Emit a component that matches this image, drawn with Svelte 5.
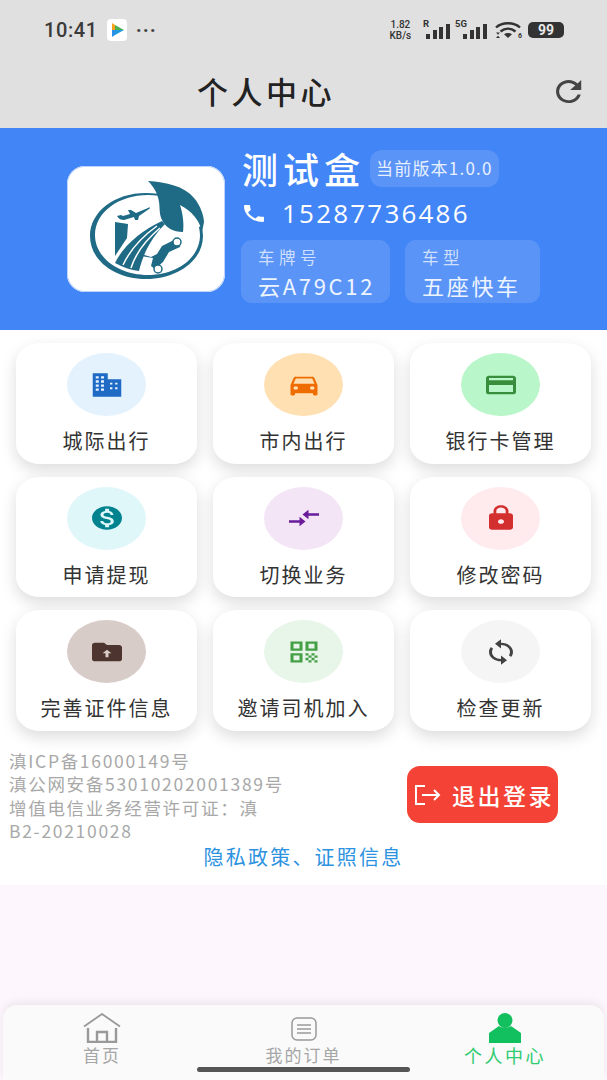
<script lang="ts">
	const buildingWindows = 'M4.5 4.5h2v2h-2zM8 4.5h2v2H8zM4.5 8h2v2h-2zM8 8h2v2H8zM4.5 11.5h2v2h-2zM8 11.500h2v2H8zM4.5 15h2v2h-2zM8 15h2v2H8zM14 10h1.6v1.6H14zM17.4 10H19v1.6h-1.6zM14 14h1.6v1.6H14zM17.4 14H19v1.6h-1.6z';

	const menu = [
		{ label: '城际出行', bg: '#e3f2fd', fg: '#1f6ac4', d: 'M2.5 2h10v5h9v15h-19z', over: buildingWindows },
		{ label: '市内出行', bg: '#ffe0b2', fg: '#ef6c00', d: 'M18.92 6.01C18.72 5.42 18.16 5 17.5 5h-11c-.66 0-1.21.42-1.42 1.01L3 12v8c0 .55.45 1 1 1h1c.55 0 1-.45 1-1v-1h12v1c0 .55.45 1 1 1h1c.55 0 1-.45 1-1v-8l-2.08-5.99zM6.5 16c-.83 0-1.5-.67-1.5-1.5S5.67 13 6.5 13s1.5.67 1.5 1.5S7.33 16 6.5 16zm11 0c-.83 0-1.5-.67-1.5-1.5s.67-1.5 1.5-1.5 1.5.67 1.5 1.5-.67 1.5-1.5 1.5zM5 11l1.5-4.5h11L19 11H5z' },
		{ label: '银行卡管理', bg: '#b9f6ca', fg: '#388e3c', d: 'M20 4H4c-1.11 0-1.99.89-1.99 2L2 18c0 1.11.89 2 2 2h16c1.11 0 2-.89 2-2V6c0-1.11-.89-2-2-2zm0 14H4v-6h16v6zm0-10H4V6h16v2z' },
		{ label: '申请提现', bg: '#e0f7fa', fg: '#00838f', d: 'M12 2C6.48 2 2 6.48 2 12s4.48 10 10 10 10-4.48 10-10S17.52 2 12 2zm1.41 16.09V20h-2.67v-1.93c-1.71-.36-3.16-1.46-3.27-3.4h1.96c.1 1.05.82 1.87 2.65 1.87 1.96 0 2.4-.98 2.4-1.59 0-.83-.44-1.61-2.67-2.14-2.48-.6-4.18-1.62-4.18-3.67 0-1.72 1.39-2.84 3.11-3.21V4h2.67v1.95c1.86.45 2.79 1.86 2.87 3.39H14.3c-.05-1.11-.64-1.87-2.22-1.87-1.5 0-2.4.68-2.4 1.64 0 .84.65 1.39 2.67 1.91s4.18 1.39 4.18 3.91c-.01 1.83-1.38 2.83-3.12 3.16z' },
		{ label: '切换业务', bg: '#f3e5f5', fg: '#6a1b9a', d: 'M9.01 14H2v2h7.01v3L13 15l-3.99-4v3zm5.98-1v-3H22V8h-7.01V5L11 9l3.99 4z' },
		{ label: '修改密码', bg: '#ffebee', fg: '#d32f2f', d: 'M18 8h-1V6c0-2.76-2.24-5-5-5S7 3.24 7 6v2H6c-1.1 0-2 .9-2 2v10c0 1.1.9 2 2 2h12c1.1 0 2-.9 2-2V10c0-1.1-.9-2-2-2zm-6 9c-1.1 0-2-.9-2-2s.9-2 2-2 2 .9 2 2-.9 2-2 2zm3.1-9H8.9V6c0-1.71 1.39-3.1 3.1-3.1 1.71 0 3.1 1.39 3.1 3.1v2z' },
		{ label: '完善证件信息', bg: '#d7ccc8', fg: '#4e342e', d: 'M20 6h-8l-2-2H4c-1.1 0-2 .9-2 2v12c0 1.1.9 2 2 2h16c1.1 0 2-.9 2-2V8c0-1.1-.9-2-2-2z', over: 'M12 10l3 3h-2v3.5h-2V13H9z' },
		{ label: '邀请司机加入', bg: '#e8f5e9', fg: '#43a047', d: 'M3 11h8V3H3v8zm2-6h4v4H5V5zM3 21h8v-8H3v8zm2-6h4v4H5v-4zM13 3v8h8V3h-8zm6 6h-4V5h4v4zM13 13h2v2h-2zM17 13h2v2h-2zM15 15h2v2h-2zM19 15h2v2h-2zM13 17h2v2h-2zM17 17h2v2h-2zM15 19h2v2h-2zM19 19h2v2h-2z' },
		{ label: '检查更新', bg: '#f5f5f5', fg: '#424242', d: 'M12 4V1L8 5l4 4V6c3.31 0 6 2.69 6 6 0 1.01-.25 1.97-.7 2.8l1.46 1.46C19.54 15.03 20 13.57 20 12c0-4.42-3.58-8-8-8zm0 14c-3.31 0-6-2.69-6-6 0-1.01.25-1.97.7-2.8L5.24 7.74C4.46 8.97 4 10.43 4 12c0 4.42 3.58 8 8 8v3l4-4-4-4v3z' }
	];

	const signalBars = [5, 9, 12, 15];
</script>

<div class="page">
	<header class="top">
		<div class="status">
			<div class="status-left">
				<span class="time">10:41</span>
				<svg class="app-icon" viewBox="0 0 20 22" width="20" height="22">
					<rect width="20" height="22" rx="4" fill="#fff" />
					<path d="M5 4v7h3V6z" fill="#f6a21e" />
					<path d="M5 18v-7h3v5z" fill="#2a8fe8" />
					<path d="M8 6l9 5-9 0z" fill="#4caf50" />
					<path d="M8 16l9-5-9 0z" fill="#1e9be0" />
				</svg>
				<span class="dots">···</span>
			</div>
			<div class="status-right">
				<span class="speed">1.82<br />KB/s</span>
				<span class="net net-r"><i>R</i>
					<span class="bars">{#each signalBars as h}<b style="height:{h}px"></b>{/each}</span>
				</span>
				<span class="net net-5g"><i>5G</i>
					<span class="bars">{#each signalBars as h}<b style="height:{h}px"></b>{/each}</span>
				</span>
				<span class="wifi">
					<svg viewBox="0 0 26 18" width="26" height="18">
						<path d="M1 6.500C7 .8 19 .8 25 6.500" fill="none" stroke="#333" stroke-width="2.400" />
						<path d="M5.500 10.500c4.500-3.800 10.500-3.800 15 0" fill="none" stroke="#333" stroke-width="2.400" />
						<path d="M13 17l-4-3.800c2.400-1.500 5.600-1.500 8 0z" fill="#333" />
						<path d="M1 11.500h4l-2 2.200zM1 17h4l-2-2.200z" fill="#333" />
					</svg>
					<em>6</em>
				</span>
				<span class="battery">99</span>
			</div>
		</div>
		<div class="nav">
			<h1>个人中心</h1>
			<svg class="refresh" viewBox="4 4 16.500 16" width="26" height="23" preserveAspectRatio="none">
				<path fill="#444" d="M17.65 6.35C16.2 4.9 14.21 4 12 4c-4.42 0-7.99 3.58-7.99 8s3.57 8 7.99 8c3.73 0 6.84-2.55 7.73-6h-2.08c-.82 2.33-3.04 4-5.65 4-3.31 0-6-2.69-6-6s2.69-6 6-6c1.66 0 3.14.69 4.22 1.78L13 11h7V4l-2.35 2.35z" />
			</svg>
		</div>
	</header>

	<section class="profile">
		<div class="logo">
			<svg viewBox="0 0 158 126" width="158" height="126">
				<!-- ring, thick on the lower left and thin on the upper right -->
				<path fill-rule="evenodd" fill="#1f6a85" d="M79 27C47 27 23 46 23 70s24 43 56 43 57-19 57-43S111 27 79 27zM81 29c29 0 52 17 52 40s-23 40-52 40-53-17-53-40 24-40 53-40z" />
				<path d="M93 22h46v36l-14 6-32-14z" fill="#fff" />
				<!-- leaf -->
				<path fill="#1f6a85" d="M81 15c18 1 36 5 46 17 7 8 10 19 10 24l-2 10c-2-11-10-21-22-27 3 9 4 19 3 27-10 0-17-4-21-12-3-6-2-12-3-18-1-8-5-15-11-21z" />
				<!-- plane -->
				<path fill="#1f6a85" d="M50 50l4-1 2 1 7-2-2-4h3l5 3 12-5c2-1 3 0 1 1l-10 7-1 4h-3l-1-3-10 3c-3 0-5-1-7-4z" />
				<!-- building -->
				<path fill="#1f6a85" d="M48 56l13 2-1 14-12 18z" />
				<!-- road -->
				<path fill="#1f6a85" d="M95 55l3 3c-11 11-21 26-26 47-8-1-17-4-24-8 8-17 27-33 47-42z" />
				<path d="M90 60C76 70 64 82 56 99" fill="none" stroke="#fff" stroke-width="1.500" />
				<path d="M93 62C80 73 69 86 64 102" fill="none" stroke="#fff" stroke-width="1.500" />
				<!-- car -->
				<path fill="#1f6a85" d="M74 88l10 3 6-3 5-8 14-7 5 2-1 6-11 5-6 10-8 7-4-3 2-8-12-2z" />
				<circle cx="110" cy="76" r="4" fill="#fff" stroke="#1f6a85" stroke-width="1.500" />
				<circle cx="91" cy="103" r="4" fill="#fff" stroke="#1f6a85" stroke-width="1.500" />
			</svg>
		</div>
		<div class="info">
			<div class="name-row">
				<span class="name">测试盒</span>
				<span class="version">当前版本1.0.0</span>
			</div>
			<div class="phone">
				<svg viewBox="3 3 18 18" width="20" height="17" preserveAspectRatio="none">
					<path fill="#fff" d="M6.62 10.79c1.44 2.83 3.76 5.14 6.59 6.59l2.2-2.2c.27-.27.67-.36 1.02-.24 1.12.37 2.33.57 3.57.57.55 0 1 .45 1 1V20c0 .55-.45 1-1 1-9.39 0-17-7.61-17-17 0-.55.45-1 1-1h3.5c.55 0 1 .45 1 1 0 1.25.2 2.45.57 3.57.11.35.03.74-.25 1.02l-2.2 2.2z" />
				</svg>
				<span>15287736486</span>
			</div>
			<div class="tags">
				<div class="tag plate">
					<span class="tag-label">车牌号</span>
					<span class="tag-value">云A79C12</span>
				</div>
				<div class="tag model">
					<span class="tag-label">车型</span>
					<span class="tag-value">五座快车</span>
				</div>
			</div>
		</div>
	</section>

	<section class="grid">
		{#each menu as item}
			<div class="card">
				<div class="circle" style="background:{item.bg}">
					<svg viewBox="0 0 24 24" width="36" height="28" preserveAspectRatio="none">
						<path d={item.d} fill={item.fg} />
						{#if item.over}<path d={item.over} fill={item.bg} />{/if}
					</svg>
				</div>
				<span class="card-label">{item.label}</span>
			</div>
		{/each}
	</section>

	<section class="legal">
		<div class="legal-row">
			<div class="legal-text">
				<div>滇ICP备16000149号</div>
				<div>滇公网安备53010202001389号</div>
				<div>增值电信业务经营许可证：滇</div>
				<div>B2-20210028</div>
			</div>
			<button class="logout">
				<svg viewBox="0 0 28 22" width="28" height="22">
					<path d="M11 2H2v18h9" fill="none" stroke="#fff" stroke-width="2" />
					<path d="M8 11h17M20 6l5 5-5 5" fill="none" stroke="#fff" stroke-width="2" />
				</svg>
				<span>退出登录</span>
			</button>
		</div>
		<div class="privacy">隐私政策、证照信息</div>
	</section>

	<div class="spacer">
		<nav class="tabs">
			<div class="tab">
				<svg viewBox="0 0 38 30" width="38" height="30">
					<path d="M1 13.500L19 1l18 12.500" fill="none" stroke="#999" stroke-width="1.800" />
					<path d="M5 15v14h28V15M14 29V19h10v10" fill="none" stroke="#999" stroke-width="2.400" />
				</svg>
				<span>首页</span>
			</div>
			<div class="tab">
				<svg class="doc" viewBox="0 0 26 24" width="26" height="24">
					<rect x="1" y="1" width="24" height="22" rx="5" fill="none" stroke="#999" stroke-width="1.500" />
					<path d="M6 8h14M6 12h14M6 16h14" stroke="#999" stroke-width="1.500" />
				</svg>
				<span>我的订单</span>
			</div>
			<div class="tab active">
				<svg viewBox="0 0 32 30" width="32" height="30">
					<circle cx="16" cy="7.500" r="7.500" fill="#12c060" />
					<path d="M10 13c2 2 10 2 12 0l10 7v10H0V20z" fill="#12c060" />
				</svg>
				<span>个人中心</span>
			</div>
			<div class="home-bar"></div>
		</nav>
	</div>
</div>

<style>
	:global(body) {
		margin: 0;
		background: #fff;
	}

	.page {
		width: 607px;
		height: 1080px;
		display: flex;
		flex-direction: column;
		overflow: hidden;
		background: #fff;
		font-family: "Noto Sans CJK SC", "Noto Sans", sans-serif;
	}

	.top {
		height: 128px;
		background: #e0e0e0;
		flex: none;
	}

	.status {
		height: 60px;
		display: flex;
		align-items: center;
		justify-content: space-between;
		padding: 0 43px 0 44px;
	}

	.status-left,
	.status-right {
		display: flex;
		align-items: center;
	}

	.time {
		font-family: Roboto, sans-serif;
		font-size: 20px;
		font-weight: 500;
		letter-spacing: 0.6px;
		color: #3a3a3a;
	}

	.app-icon {
		margin-left: 9px;
	}

	.dots {
		margin-left: 9px;
		font-family: Roboto, sans-serif;
		font-size: 20px;
		font-weight: 700;
		letter-spacing: 1px;
		color: #444;
	}

	.speed {
		width: 25px;
		font-family: Roboto, sans-serif;
		font-size: 10px;
		font-weight: 500;
		line-height: 11px;
		text-align: center;
		color: #333;
		white-space: nowrap;
	}

	.net {
		position: relative;
		display: flex;
		align-items: flex-end;
		height: 18px;
	}

	.net-r {
		margin-left: 10px;
		padding-left: 3px;
	}

	.net-5g {
		margin-left: 5px;
		padding-left: 8px;
	}

	.net i {
		position: absolute;
		left: 0;
		top: -3px;
		font-family: Roboto, sans-serif;
		font-size: 9.500px;
		font-style: normal;
		font-weight: 700;
		line-height: 11px;
		color: #333;
	}

	.bars {
		display: flex;
		align-items: flex-end;
		gap: 2.700px;
	}

	.bars b {
		width: 4px;
		background: #333;
	}

	.wifi {
		position: relative;
		display: flex;
		margin-left: 8px;
	}

	.wifi em {
		position: absolute;
		right: -1px;
		bottom: -1px;
		font-family: Roboto, sans-serif;
		font-size: 7px;
		font-style: normal;
		font-weight: 700;
		line-height: 8px;
		color: #333;
	}

	.battery {
		width: 36px;
		height: 16px;
		margin-left: 7px;
		border-radius: 5px;
		background: #333;
		color: #e8e8e8;
		font-family: Roboto, sans-serif;
		font-size: 14px;
		font-weight: 700;
		line-height: 16px;
		text-align: center;
	}

	.nav {
		position: relative;
		height: 68px;
		display: flex;
		align-items: center;
		justify-content: center;
	}

	.nav h1 {
		margin: 0 75px 8px 0;
		font-size: 31px;
		font-weight: 500;
		letter-spacing: 3.500px;
		color: #222;
	}

	.refresh {
		position: absolute;
		right: 25px;
		top: 20px;
	}

	.profile {
		height: 202px;
		flex: none;
		background: #4285f6;
		display: flex;
		align-items: flex-start;
		padding: 0 0 0 67px;
		box-sizing: border-box;
		color: #fff;
	}

	.logo {
		margin-top: 38px;
		width: 158px;
		height: 126px;
		background: #fff;
		border-radius: 18px;
		box-shadow: inset 0 0 0 1px #bcd4fb;
		flex: none;
	}

	.info {
		margin-left: 16px;
		padding-top: 23px;
		display: flex;
		flex-direction: column;
	}

	.name-row {
		display: flex;
		align-items: center;
		gap: 8px;
		height: 38px;
	}

	.name {
		margin: -4px -3px 0 1px;
		font-size: 36px;
		font-weight: 500;
		letter-spacing: 5px;
		white-space: nowrap;
		line-height: 38px;
	}

	.version {
		padding: 0 6px;
		height: 37px;
		line-height: 36px;
		border-radius: 12px;
		background: rgba(255, 255, 255, 0.13);
		font-size: 17px;
		letter-spacing: 1.200px;
		color: #e8f0ff;
		white-space: nowrap;
		margin-top: -3px;
	}

	.phone {
		margin-top: 5px;
		margin-left: 3px;
		height: 38px;
		display: flex;
		align-items: center;
		gap: 18px;
		font-family: "Open Sans", sans-serif;
		font-size: 26px;
		font-weight: 500;
		letter-spacing: 2.200px;
	}

	.tags {
		margin-top: 8px;
		display: flex;
		gap: 15px;
	}

	.tag {
		height: 63px;
		box-sizing: border-box;
		padding: 5px 17px 0;
		border-radius: 11px;
		background: rgba(255, 255, 255, 0.13);
		display: flex;
		flex-direction: column;
		white-space: nowrap;
	}

	.plate {
		width: 149px;
	}

	.model {
		width: 135px;
	}

	.tag-label {
		font-size: 16.500px;
		letter-spacing: 4.500px;
		line-height: 24px;
		color: rgba(255, 255, 255, 0.72);
	}

	.tag-value {
		font-size: 22px;
		letter-spacing: 2.700px;
		line-height: 32px;
		color: #eef4ff;
	}

	.grid {
		flex: none;
		display: grid;
		grid-template-columns: repeat(3, 181px);
		grid-auto-rows: 120.500px;
		gap: 13px 16px;
		padding: 13px 16px 0;
	}

	.card {
		background: #fff;
		border-radius: 24px / 20px;
		box-shadow: 0 6px 16px rgba(0, 0, 0, 0.14);
		display: flex;
		flex-direction: column;
		align-items: center;
		padding-top: 10px;
		box-sizing: border-box;
	}

	.circle {
		width: 79px;
		height: 63px;
		border-radius: 50%;
		display: flex;
		align-items: center;
		justify-content: center;
		flex: none;
	}

	.card-label {
		margin-top: 12px;
		font-size: 20px;
		letter-spacing: 2px;
		line-height: 26px;
		color: #333;
		white-space: nowrap;
	}

	.legal {
		flex: none;
		height: 154px;
		box-sizing: border-box;
		padding-top: 18px;
	}

	.legal-row {
		display: flex;
		align-items: center;
		justify-content: space-between;
		padding: 0 49px 0 9px;
	}

	.legal-text {
		font-size: 17.500px;
		letter-spacing: 1.700px;
		line-height: 23.500px;
		color: #a8a8a8;
		white-space: nowrap;
	}

	.logout {
		width: 151px;
		height: 57px;
		padding: 0 0 0 7px;
		margin-top: -2px;
		border: none;
		border-radius: 13px;
		background: #f44336;
		color: #fff;
		display: flex;
		align-items: center;
		gap: 10px;
		font-family: inherit;
		font-size: 23px;
		font-weight: 500;
		letter-spacing: 2.500px;
		white-space: nowrap;
	}

	.privacy {
		margin-top: 2px;
		text-align: center;
		font-size: 20px;
		letter-spacing: 2.200px;
		line-height: 24px;
		color: #2d92e0;
	}

	.spacer {
		flex: 1;
		display: flex;
		flex-direction: column;
		justify-content: flex-end;
		background: #fdf6fd;
	}

	.tabs {
		position: relative;
		height: 75px;
		margin: 0 3px;
		padding: 8px 1px 0;
		box-sizing: border-box;
		display: grid;
		grid-template-columns: 196px 1fr 196px;
		background: #fafafa;
		border-radius: 14px 14px 0 0;
		box-shadow: 0 -3px 8px rgba(0, 0, 0, 0.07);
	}

	.tab {
		display: flex;
		flex-direction: column;
		align-items: center;
		font-size: 17px;
		letter-spacing: 2px;
		line-height: 22px;
		color: #a6a6a6;
		white-space: nowrap;
	}

	.tab svg {
		height: 30px;
		margin-bottom: 1px;
	}

	.tab .doc {
		height: 24px;
		margin: 4px 0 3px;
	}

	.tab.active {
		color: #2ecb70;
		font-size: 18px;
		letter-spacing: 2.500px;
	}

	.home-bar {
		position: absolute;
		left: 194px;
		bottom: 8px;
		width: 213px;
		height: 5px;
		border-radius: 3px;
		background: #555;
	}
</style>
